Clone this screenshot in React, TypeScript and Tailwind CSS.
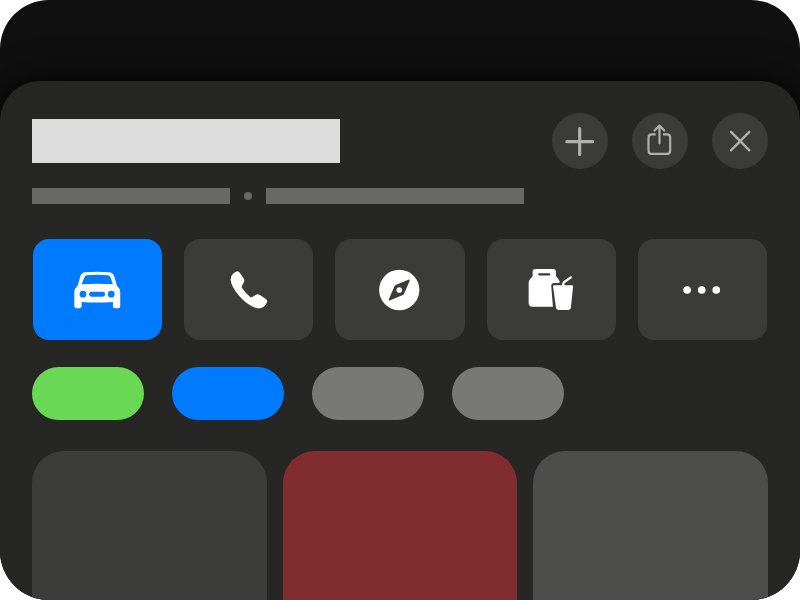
import type { ReactNode } from "react";

function RoundButton({ label, children }: { label: string; children: ReactNode }) {
  return (
    <button aria-label={label} className="size-14 overflow-hidden rounded-full bg-[#3b3b39]">
      {children}
    </button>
  );
}

function ActionTile({ label, color, viewBox, children }: { label: string; color: string; viewBox: string; children: ReactNode }) {
  return (
    <button aria-label={label} className={`h-[101px] overflow-hidden rounded-[16px] ${color}`}>
      <svg viewBox={viewBox} preserveAspectRatio="none" className="block h-full w-full" fill="#fff">
        {children}
      </svg>
    </button>
  );
}

const iconStroke = {
  className: "block size-full",
  fill: "none",
  stroke: "#b0b0ad",
  strokeLinecap: "round" as const,
  strokeLinejoin: "round" as const,
};

export default function App() {
  return (
    <div className="h-[600px] w-[800px] overflow-hidden bg-white">
      <main className="flex h-full flex-col overflow-hidden rounded-[49px] bg-[#101010] pt-[81px]">
        <section className="flex flex-1 flex-col rounded-t-[40px] bg-[#262624] px-8 pt-8 shadow-[0_0_36px_rgba(0,0,0,0.9)]">
          <header className="flex h-14 items-start justify-between">
            <div className="mt-1.5 h-11 w-[308px] bg-[#dcdcdc]" />
            <div className="flex gap-6">
              <RoundButton label="Add">
                <svg {...iconStroke} viewBox="36 39 168 168" strokeWidth="9.500">
                  <path d="M80.500 125H157.500M119 86V163.500" />
                </svg>
              </RoundButton>
              <RoundButton label="Share">
                <svg {...iconStroke} viewBox="276 39 168 168" strokeWidth="6.500">
                  <path strokeLinecap="butt" d="M347 103H335Q325.500 103 325.500 112V152Q325.500 161.500 335 161.500H381Q390.500 161.500 390.500 152V112Q390.500 103 381 103H369" />
                  <path d="M358.500 130V77M343.500 91.500L358.500 76.500L373 91.500" />
                </svg>
              </RoundButton>
              <RoundButton label="Close">
                <svg {...iconStroke} viewBox="516 39 168 168" strokeWidth="7">
                  <path d="M573 95.500L628 151M628 95.500L573 151" />
                </svg>
              </RoundButton>
            </div>
          </header>

          <div className="mt-[19px] flex h-4 items-center">
            <div className="h-4 w-[198px] bg-[#686866]" />
            <div className="mx-3.5 size-2 rounded-full bg-[#686866]" />
            <div className="h-4 w-[258px] bg-[#686866]" />
          </div>

          <div className="mx-px mt-[35px] grid grid-cols-5 gap-[22px]">
            <ActionTile label="Directions" color="bg-[#007aff]" viewBox="24 27 388 303">
              <path
                fillRule="evenodd"
                d="M158 167L166 139Q170 128 181 127Q217 123 252 127Q264 128 268 139L276 167Q286 175 286 188V229Q286 235 280 235H270Q264 235 264 229V216Q217 219 170 216V229Q170 235 164 235H154Q148 235 148 229V188Q148 175 158 167ZM170 163Q217 160 264 163L257 143Q255 137 249 136Q217 133 185 136Q180 137 178 143Z"
              />
              <g fill="#007aff">
                <circle cx="174" cy="192.500" r="10" />
                <circle cx="259" cy="192.500" r="10" />
                <rect x="192.500" y="185.500" width="48" height="14.500" rx="7" />
              </g>
            </ActionTile>
            <ActionTile label="Call" color="bg-[#3b3b39]" viewBox="12 27 388 303">
              <path d="M168 125Q175 122 180 129L191 145Q195 151 191 158L186 168Q184 171 187 175Q196 189 210 200Q214 203 218 200L228 194Q234 191 240 195L258 207Q263 211 261 217Q257 229 244 234Q236 236 226 233Q200 224 178 198Q155 172 152 151Q151 133 168 125Z" />
            </ActionTile>
            <ActionTile label="Website" color="bg-[#3b3b39]" viewBox="16 27 388 303">
              <circle cx="209" cy="180" r="60.500" />
              <path fill="#3b3b39" d="M194 170Q195 167 198 165L236 149Q242 147 240 153L224 190Q223 193 220 195L182 211Q176 213 178 207Z" />
              <circle cx="209" cy="180" r="8.500" />
            </ActionTile>
            <ActionTile label="Order" color="bg-[#3b3b39]" viewBox="20 27 388 303">
              <path d="M165 117H219Q227 117 227 125V138L234 147Q236 150 239 156L235 159H222Q212 160 213 169L218 230H157Q145 230 145 218V158Q145 152 150 147L157 139V125Q157 117 165 117Z" />
              <path fill="none" stroke="#3b3b39" strokeWidth="6.500" strokeLinecap="round" d="M177 133H207" />
              <path d="M222 166H275Q279 166 278.500 170L272 232Q271 240 263 240H236Q228 240 227 232L218.500 170Q218 166 222 166Z" />
              <path fill="none" stroke="#fff" strokeWidth="7" strokeLinecap="round" strokeLinejoin="round" d="M249 167V162Q249 159 252 156L272 142" />
            </ActionTile>
            <ActionTile label="More" color="bg-[#3b3b39]" viewBox="24 27 388 303">
              <circle cx="171.500" cy="180" r="11.500" />
              <circle cx="215.500" cy="180" r="11.500" />
              <circle cx="259" cy="180" r="11.500" />
            </ActionTile>
          </div>

          <div className="mt-[27px] flex gap-7">
            <div className="h-[53px] w-28 rounded-full bg-[#68d855]" />
            <div className="h-[53px] w-28 rounded-full bg-[#007aff]" />
            <div className="h-[53px] w-28 rounded-full bg-[#787876]" />
            <div className="h-[53px] w-28 rounded-full bg-[#787876]" />
          </div>

          <div className="mt-[31px] grid flex-1 grid-cols-3 gap-4">
            <div className="rounded-t-[32px] bg-[#3c3c3a]" />
            <div className="rounded-t-[32px] bg-[#812d2f]" />
            <div className="rounded-t-[32px] bg-[#4d4d4b]" />
          </div>
        </section>
      </main>
    </div>
  );
}
